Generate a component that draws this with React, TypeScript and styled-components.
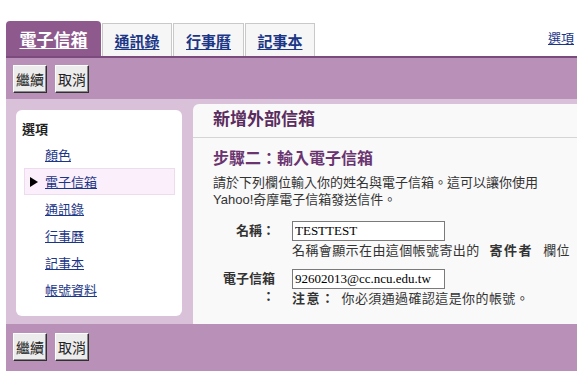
import React from 'react'
import styled, { createGlobalStyle } from 'styled-components'

const GlobalStyle = createGlobalStyle`
    body {
        margin: 0;
        background: #fff;
        font-family: "Liberation Sans", "Noto Sans CJK TC", sans-serif;
        font-size: 13px;
        color: #333;
    }
`;

const Page = styled.div`
    padding: 21px 0 0 6px;
`;

const TabRow = styled.div`
    display: flex;
    align-items: flex-end;
    height: 35px;
`;

const Tab = styled.a<{ $active?: boolean }>`
    box-sizing: border-box;
    display: flex;
    align-items: center;
    justify-content: center;
    margin-right: 1px;
    font-family: "Noto Sans CJK TC", sans-serif;
    font-weight: bold;
    text-decoration: underline;
    text-underline-offset: 2px;
    cursor: pointer;
    ${({ $active }) =>
        $active
            ? `
        height: 35px;
        width: 95px;
        background: #8e5a8e;
        color: #fff;
        font-size: 17px;
        border-radius: 4px 4px 0 0;
    `
            : `
        height: 33px;
        width: 70px;
        background: #f6f6f6;
        color: #1c3687;
        font-size: 15px;
        border: 1px solid #c9c9c9;
        border-bottom: none;
    `}
`;

const OptionLink = styled.a`
    margin-left: auto;
    margin-right: 3px;
    align-self: center;
    margin-top: -3px;
    color: #1c3687;
    font-size: 13px;
    text-decoration: underline;
    font-family: "Noto Sans CJK TC", sans-serif;
`;

const TabLine = styled.div`
    height: 2px;
    background: #7b4b7d;
`;

const ButtonBar = styled.div<{ $bottom?: boolean }>`
    display: flex;
    gap: 8px;
    background: #b890b8;
    padding: ${({ $bottom }) => ($bottom ? '9px 7px 10px' : '7px 7px 6px')};
`;

const Button = styled.button`
    height: 28px;
    padding: 0 2px;
    background: #ececec;
    border: 1px solid;
    border-color: #fff #303030 #303030 #fff;
    box-shadow: inset -1px -1px #8a8a8a;
    font-family: "Noto Sans CJK TC", sans-serif;
    font-size: 14px;
    color: #222;
`;

const Main = styled.div`
    display: flex;
    height: 225px;
    background: #d9c1d9;
`;

const SideCol = styled.div`
    box-sizing: border-box;
    width: 184px;
    padding: 11px 8px 8px 10px;
`;

const SidePanel = styled.div`
    box-sizing: border-box;
    height: 100%;
    background: #fff;
    border-radius: 6px;
    padding: 9px 7px 0 6px;
`;

const NavHeading = styled.div`
    font-family: "Noto Sans CJK TC", sans-serif;
    font-weight: bold;
    line-height: 20px;
    color: #222;
    margin-bottom: 2px;
`;

const NavList = styled.ul`
    list-style: none;
    margin: 0 0 0 2px;
    padding: 0;
`;

const NavItem = styled.li<{ $active?: boolean }>`
    box-sizing: border-box;
    height: 27px;
    display: flex;
    align-items: center;
    padding-left: 5px;
    border: 1px solid ${({ $active }) => ($active ? '#eddcee' : 'transparent')};
    background: ${({ $active }) => ($active ? '#fbeffb' : 'transparent')};
`;

const Marker = styled.span`
    width: 15px;
    display: flex;
    align-items: center;
`;

const NavLink = styled.a`
    color: #1c3687;
    text-decoration: underline;
    font-family: "Noto Sans CJK TC", sans-serif;
`;

const Content = styled.div`
    flex: 1;
    margin: 5px 0 0 3px;
    background: #f9f9f9;
    border-top-left-radius: 6px;
`;

const Title = styled.h2`
    box-sizing: border-box;
    margin: 0;
    height: 34px;
    line-height: 28px;
    padding-left: 20px;
    font-size: 17px;
    color: #5b2c5e;
    border-bottom: 1px solid #d5d5d5;
    font-family: "Noto Sans CJK TC", sans-serif;
`;

const Body = styled.div`
    padding: 10px 0 0 20px;
`;

const StepHeading = styled.h3`
    margin: 0;
    font-size: 16px;
    line-height: 18px;
    color: #6a3470;
    font-family: "Noto Sans CJK TC", sans-serif;
`;

const Description = styled.p`
    margin: 8px 0 0;
    line-height: 17px;
    color: #333;
`;

const FormGrid = styled.div`
    display: grid;
    grid-template-columns: 62px 1fr;
    column-gap: 17px;
    row-gap: 10px;
    margin-top: 13px;
`;

const Label = styled.div`
    font-weight: bold;
    text-align: right;
    line-height: 18px;
    color: #333;
    font-family: "Noto Sans CJK TC", sans-serif;
`;

const Field = styled.div`
    display: flex;
    flex-direction: column;
`;

const Input = styled.input`
    box-sizing: border-box;
    width: 153px;
    height: 20px;
    border: 1px solid #7a7a7a;
    padding: 0 2px;
    background: #fff;
    color: #000;
    font-family: "Liberation Serif", serif;
    font-size: 13px;
`;

const Hint = styled.div`
    margin-top: 1px;
    line-height: 17px;
    white-space: nowrap;
    color: #333;
    letter-spacing: 0.4px;
`;

const Strong = styled.b<{ $lead?: boolean }>`
    letter-spacing: 1.5px;
    margin: ${({ $lead }) => ($lead ? '0 6px 0 0' : '0 10px')};
`;

const Arrow = () => (
    <svg width="8" height="10" viewBox="0 0 8 10">
        <polygon points="0,0 8,5 0,10" fill="#000" />
    </svg>
);

const navItems = ['顏色', '電子信箱', '通訊錄', '行事曆', '記事本', '帳號資料'];

const Actions = ({ bottom }: { bottom?: boolean }) => (
    <ButtonBar $bottom={bottom}>
        <Button>繼續</Button>
        <Button>取消</Button>
    </ButtonBar>
);

export default function App(): JSX.Element {
    return (
        <Page>
            <GlobalStyle />
            <TabRow>
                <Tab $active>電子信箱</Tab>
                <Tab>通訊錄</Tab>
                <Tab style={{ width: 71 }}>行事曆</Tab>
                <Tab>記事本</Tab>
                <OptionLink>選項</OptionLink>
            </TabRow>
            <TabLine />
            <Actions />
            <Main>
                <SideCol>
                    <SidePanel>
                        <NavHeading>選項</NavHeading>
                        <NavList>
                            {navItems.map((item) => (
                                <NavItem key={item} $active={item === '電子信箱'}>
                                    <Marker>{item === '電子信箱' && <Arrow />}</Marker>
                                    <NavLink>{item}</NavLink>
                                </NavItem>
                            ))}
                        </NavList>
                    </SidePanel>
                </SideCol>
                <Content>
                    <Title>新增外部信箱</Title>
                    <Body>
                        <StepHeading>步驟二：輸入電子信箱</StepHeading>
                        <Description>
                            請於下列欄位輸入你的姓名與電子信箱。這可以讓你使用
                            <br />
                            Yahoo!奇摩電子信箱發送信件。
                        </Description>
                        <FormGrid>
                            <Label>名稱：</Label>
                            <Field>
                                <Input defaultValue="TESTTEST" />
                                <Hint>
                                    名稱會顯示在由這個帳號寄出的<Strong>寄件者</Strong>欄位
                                </Hint>
                            </Field>
                            <Label>
                                電子信箱
                                <br />：
                            </Label>
                            <Field>
                                <Input defaultValue="92602013@cc.ncu.edu.tw" />
                                <Hint>
                                    <Strong $lead>注意：</Strong>你必須通過確認這是你的帳號。
                                </Hint>
                            </Field>
                        </FormGrid>
                    </Body>
                </Content>
            </Main>
            <Actions bottom />
        </Page>
    );
}
